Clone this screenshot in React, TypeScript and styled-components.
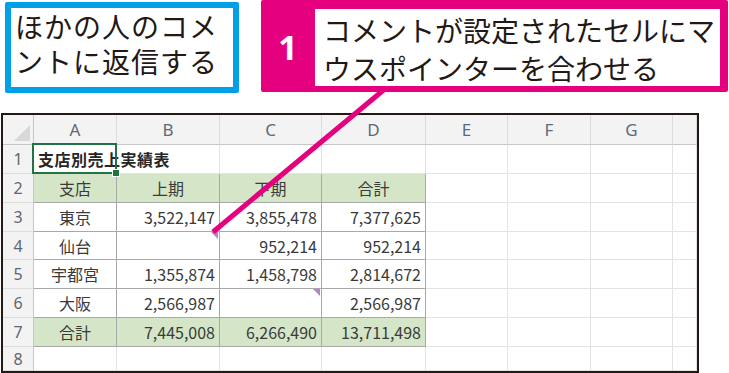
import styled, { createGlobalStyle } from "styled-components";

const GlobalStyle = createGlobalStyle`
  html, body {
    margin: 0;
    padding: 0;
    background: #fff;
  }
  body {
    font-family: "Noto Sans CJK JP", "Noto Sans", sans-serif;
  }
`;

const MAGENTA = "#e4007f";
const BLUE = "#00a0e9";
const INK = "#231815";

const colWidths = [31, 83, 103, 102, 104, 82, 83, 82, 24];
const rowHeights = [30, 29, 29, 29, 28, 29, 29, 29, 24];
const letters = ["A", "B", "C", "D", "E", "F", "G", ""];

type Kind = "empty" | "table" | "green";

type CellData = {
  text?: string;
  align?: "left" | "center" | "right";
  kind: Kind;
  comment?: boolean;
};

const t = (text: string, align: "center" | "right" = "right", comment = false): CellData => ({
  text,
  align,
  kind: "table",
  comment,
});
const g = (text: string, align: "center" | "right" = "center"): CellData => ({
  text,
  align,
  kind: "green",
});
const e: CellData = { kind: "empty" };

const rows: CellData[][] = [
  [e, e, e, e, e, e, e, e],
  [g("支店"), g("上期"), g("下期"), g("合計"), e, e, e, e],
  [t("東京", "center"), t("3,522,147"), t("3,855,478"), t("7,377,625"), e, e, e, e],
  [t("仙台", "center"), t("", "right", true), t("952,214"), t("952,214"), e, e, e, e],
  [t("宇都宮", "center"), t("1,355,874"), t("1,458,798"), t("2,814,672"), e, e, e, e],
  [t("大阪", "center"), t("2,566,987"), t("", "right", true), t("2,566,987"), e, e, e, e],
  [g("合計"), g("7,445,008", "right"), g("6,266,490", "right"), g("13,711,498", "right"), e, e, e, e],
  [e, e, e, e, e, e, e, e],
];

export default function App() {
  return (
    <Page>
      <GlobalStyle />
      <TopRow>
        <TitleBox>
          ほかの人のコメ
          <br />
          ントに返信する
        </TitleBox>
        <StepBox>
          <StepNumber>1</StepNumber>
          <StepText>
            コメントが設定されたセルにマ
            <br />
            ウスポインターを合わせる
          </StepText>
        </StepBox>
      </TopRow>

      <Frame>
        <Sheet>
          <Corner>
            <CornerMark />
          </Corner>
          {letters.map((l, i) => (
            <ColHeader key={"h" + i}>{l}</ColHeader>
          ))}
          {rows.map((row, r) => (
            <RowGroup key={"r" + r}>
              <RowHeader>{r + 1}</RowHeader>
              {row.map((c, ci) => {
                if (r === 0 && ci === 0) {
                  return (
                    <Cell key={ci} $kind="empty" $align="left">
                      <SheetTitle>支店別売上実績表</SheetTitle>
                      <Selection>
                        <FillHandle />
                      </Selection>
                    </Cell>
                  );
                }
                return (
                  <Cell key={ci} $kind={c.kind} $align={c.align || "left"}>
                    {c.text}
                    {c.comment && <CommentMark />}
                  </Cell>
                );
              })}
            </RowGroup>
          ))}
        </Sheet>
      </Frame>

      <Pointer width="729" height="373" viewBox="0 0 729 373">
        <line x1="386" y1="88" x2="213" y2="232" stroke={MAGENTA} strokeWidth="5" />
      </Pointer>
    </Page>
  );
}

const Page = styled.div`
  position: relative;
  width: 729px;
  height: 373px;
  overflow: hidden;
  background: #fff;
`;

const TopRow = styled.div`
  display: flex;
  align-items: flex-start;
  gap: 22px;
  padding-left: 5px;
  height: 93px;
`;

const TitleBox = styled.div`
  box-sizing: border-box;
  margin-top: 2px;
  width: 234px;
  height: 91px;
  border: 6px solid ${BLUE};
  border-radius: 2px;
  padding: 1px 0 0 4px;
  font-size: 28px;
  line-height: 35px;
  letter-spacing: 1px;
  color: ${INK};
  white-space: nowrap;
`;

const StepBox = styled.div`
  box-sizing: border-box;
  display: flex;
  width: 467px;
  height: 92px;
  background: ${MAGENTA};
  padding: 9px 8px 6px 0;
  border-radius: 2px;
`;

const StepNumber = styled.div`
  width: 54px;
  display: flex;
  align-items: center;
  justify-content: center;
  padding-bottom: 2px;
  color: #fff;
  font-family: "Noto Sans", sans-serif;
  font-weight: 700;
  font-size: 34px;
`;

const StepText = styled.div`
  flex: 1;
  background: #fff;
  padding: 2px 0 0 8px;
  font-size: 28px;
  line-height: 38px;
  color: ${INK};
  white-space: nowrap;
`;

const Frame = styled.div`
  margin: 20px 0 0 1px;
  width: 694px;
  border: 2px solid ${INK};
`;

const Sheet = styled.div`
  display: grid;
  grid-template-columns: ${colWidths.map((w) => w + "px").join(" ")};
  grid-template-rows: ${rowHeights.map((h) => h + "px").join(" ")};
  font-size: 16px;
`;

const RowGroup = styled.div`
  display: contents;
`;

const Corner = styled.div`
  position: relative;
  box-sizing: border-box;
  background: #f3f3f3;
  border-right: 1px solid #c6c6c6;
  border-bottom: 1px solid #c6c6c6;
`;

const CornerMark = styled.div`
  position: absolute;
  right: 3px;
  bottom: 3px;
  width: 0;
  height: 0;
  border-bottom: 16px solid #d8d8d8;
  border-left: 16px solid transparent;
`;

const ColHeader = styled.div`
  box-sizing: border-box;
  display: flex;
  align-items: center;
  justify-content: center;
  background: #f3f3f3;
  border-right: 1px solid #dcdcdc;
  border-bottom: 1px solid #c6c6c6;
  color: #5d6a78;
  font-family: "Noto Sans", sans-serif;
  font-size: 17px;
`;

const RowHeader = styled.div`
  box-sizing: border-box;
  display: flex;
  align-items: center;
  justify-content: center;
  background: #f3f3f3;
  border-right: 1px solid #c6c6c6;
  border-bottom: 1px solid #dcdcdc;
  color: #5f6670;
  font-family: "Noto Sans", sans-serif;
  font-size: 16px;
`;

const kindBg: Record<Kind, string> = {
  empty: "transparent",
  table: "#fff",
  green: "#d4e6c7",
};

const Cell = styled.div<{ $kind: Kind; $align: "left" | "center" | "right" }>`
  position: relative;
  box-sizing: border-box;
  display: flex;
  align-items: center;
  justify-content: ${(p) =>
    p.$align === "center" ? "center" : p.$align === "right" ? "flex-end" : "flex-start"};
  padding: 0 4px 0 4px;
  background: ${(p) => kindBg[p.$kind]};
  border-right: 1px solid ${(p) => (p.$kind === "empty" ? "#e3e3e3" : "#a9a9a9")};
  border-bottom: 1px solid ${(p) => (p.$kind === "empty" ? "#e3e3e3" : "#a9a9a9")};
  color: #3a3a3a;
  white-space: nowrap;
  overflow: visible;
`;

const SheetTitle = styled.span`
  position: relative;
  z-index: 1;
  font-weight: 700;
  letter-spacing: 0.5px;
  color: #262626;
`;

const Selection = styled.div`
  position: absolute;
  z-index: 2;
  left: -2px;
  top: -2px;
  right: -1px;
  bottom: -1px;
  border: 2px solid #217346;
`;

const FillHandle = styled.div`
  position: absolute;
  right: -5px;
  bottom: -5px;
  width: 6px;
  height: 6px;
  background: #217346;
  border: 1px solid #fff;
`;

const CommentMark = styled.div`
  position: absolute;
  top: 0;
  right: 1px;
  width: 0;
  height: 0;
  border-top: 7px solid #b583c7;
  border-left: 7px solid transparent;
`;

const Pointer = styled.svg`
  position: absolute;
  left: 0;
  top: 0;
  pointer-events: none;
`;
